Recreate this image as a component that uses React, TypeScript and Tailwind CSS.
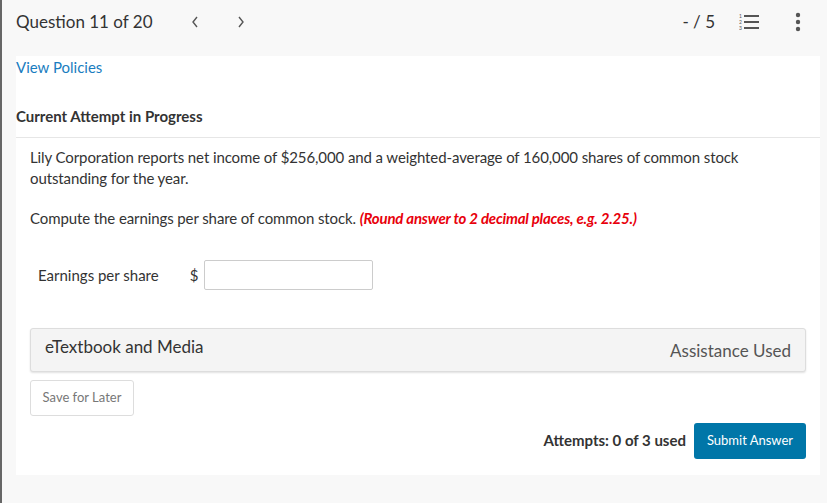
// Assessment question page - header bar with navigation, question body,
// answer input, eTextbook panel and submit controls.

function ListIcon() {
  return (
    <svg width="22" height="18" viewBox="0 0 22 18" className="text-[#555]">
      <text x="0" y="5" fontSize="5" fill="currentColor" fontFamily="Lato, sans-serif">1</text>
      <text x="0" y="11" fontSize="5" fill="currentColor" fontFamily="Lato, sans-serif">2</text>
      <text x="0" y="17" fontSize="5" fill="currentColor" fontFamily="Lato, sans-serif">3</text>
      <rect x="5" y="2" width="15" height="2" fill="currentColor" />
      <rect x="5" y="8" width="15" height="2" fill="currentColor" />
      <rect x="5" y="14" width="15" height="2" fill="currentColor" />
    </svg>
  );
}

function DotsIcon() {
  return (
    <svg width="6" height="20" viewBox="0 0 6 20" className="text-[#555]">
      <circle cx="3" cy="3" r="2.2" fill="currentColor" />
      <circle cx="3" cy="10" r="2.2" fill="currentColor" />
      <circle cx="3" cy="17" r="2.2" fill="currentColor" />
    </svg>
  );
}

function Chevron({ dir }: { dir: "left" | "right" }) {
  return (
    <svg width="8" height="12" viewBox="0 0 8 12" className="text-[#555]">
      <path
        d={dir === "left" ? "M6 1 L2 6 L6 11" : "M2 1 L6 6 L2 11"}
        fill="none"
        stroke="currentColor"
        strokeWidth="1.4"
      />
    </svg>
  );
}

export default function App() {
  return (
    <div className="h-[503px] w-[827px] overflow-hidden border-l-2 border-[#666] bg-[#f8f8f8] font-['Lato',sans-serif] text-[#333]">
      {/* Header */}
      <div className="flex h-[56px] items-start pl-[14px] pr-[26px] pt-[10px]">
        <span className="text-[17px] leading-[24px] text-[#333]">Question 11 of 20</span>
        <span className="ml-[38px] flex h-[24px] items-center">
          <Chevron dir="left" />
        </span>
        <span className="ml-[38px] flex h-[24px] items-center">
          <Chevron dir="right" />
        </span>
        <span className="ml-auto text-[17px] leading-[24px] text-[#333]">- / 5</span>
        <span className="ml-[24px] flex h-[24px] items-center">
          <ListIcon />
        </span>
        <span className="ml-[34px] flex h-[24px] items-center">
          <DotsIcon />
        </span>
      </div>

      {/* Main panel */}
      <div className="ml-[14px] mr-[7px] h-[419px] bg-white">
        <div className="pt-[1px] text-[15px] leading-[20px]">
          <a className="text-[#1a7dc0]">View Policies</a>
        </div>
        <div className="mt-[29px] border-b border-[#e6e6e6] pb-[11px] text-[15px] font-bold leading-[20px] text-[#333]">
          Current Attempt in Progress
        </div>

        <div className="px-[14px]">
          <p className="mt-[9px] text-[15px] leading-[21px] tracking-[-0.1px] text-[#333]">
            Lily Corporation reports net income of $256,000 and a weighted-average of 160,000 shares of common stock
            outstanding for the year.
          </p>
          <p className="mt-[19px] text-[15px] leading-[21px] tracking-[-0.1px] text-[#333]">
            Compute the earnings per share of common stock.{" "}
            <span className="font-bold italic tracking-[-0.2px] text-[#e8000b]">
              (Round answer to 2 decimal places, e.g. 2.25.)
            </span>
          </p>

          <div className="mt-[31px] flex items-center">
            <span className="ml-[8px] text-[15px] text-[#333]">Earnings per share</span>
            <span className="ml-[31px] text-[15px] text-[#333]">$</span>
            <input className="ml-[6px] h-[30px] w-[169px] rounded-[2px] border border-[#ccc] bg-white outline-none" />
          </div>

          <div className="mt-[38px] flex h-[44px] rounded-[3px] border border-[#ddd] bg-[#f4f4f4] pl-[14px] pr-[14px] shadow-[0_1px_2px_rgba(0,0,0,0.12)]">
            <span className="pt-[5px] text-[17px] text-[#333]">eTextbook and Media</span>
            <span className="ml-auto pt-[9px] text-[17px] text-[#555]">Assistance Used</span>
          </div>

          <button className="mt-[8px] h-[36px] w-[104px] rounded-[3px] border border-[#ddd] bg-white text-[13px] text-[#777]">
            Save for Later
          </button>

          <div className="mt-[7px] flex items-center justify-end">
            <span className="-translate-y-[1px] text-[15px] font-bold text-[#333]">Attempts: 0 of 3 used</span>
            <button className="ml-[8px] h-[36px] w-[112px] rounded-[3px] bg-[#0076a8] text-[13px] text-white">
              Submit Answer
            </button>
          </div>
        </div>
      </div>
    </div>
  );
}
